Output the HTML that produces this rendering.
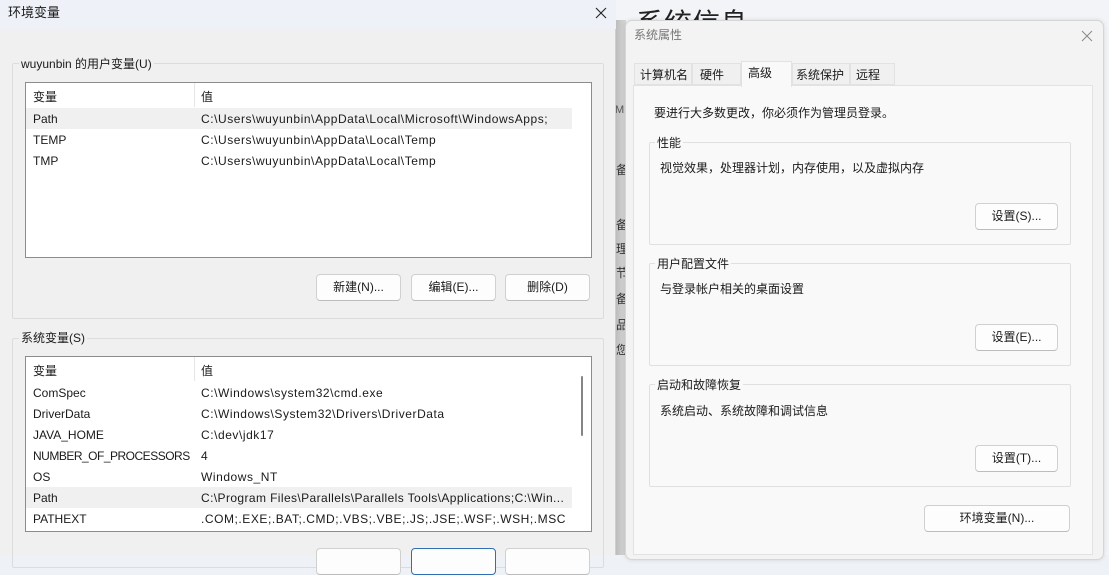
<!DOCTYPE html>
<html><head><meta charset="utf-8"><style>
*{margin:0;padding:0;box-sizing:border-box}
body{width:1109px;height:555px;overflow:hidden;position:relative;background:#eef1f5;font-family:"Liberation Sans","Noto Sans CJK SC",sans-serif;font-size:12px;color:#1a1a1a}
.a{position:absolute}
.t{position:absolute;white-space:nowrap;font-size:12px;line-height:14px}
.btn{position:absolute;background:#fdfdfd;border:1px solid #d0d0d0;border-bottom-color:#bcbcbc;border-radius:4px;text-align:center;font-size:12px;line-height:25px}
.grp{position:absolute;border:1px solid #dcdcdc;border-radius:2px}
.lbl{position:absolute;background:#f0f0f0;padding:0 2px;font-size:12px;line-height:14px;white-space:nowrap}
.tbl{position:absolute;background:#fff;border:1px solid #8c8c8c}
.row{position:absolute;left:0;height:21px;width:546px}
.row span{position:absolute;top:4px;font-size:12px;line-height:14px;white-space:nowrap}
.row span+span{letter-spacing:0.55px}
</style></head><body>
<div class="a" style="left:616px;top:0;width:493px;height:555px;background:#f2f4f7"></div>
<div class="t" style="left:636px;top:8px;font-size:28px;line-height:32px;color:#222;height:13px;overflow:hidden">系统信息</div>
<div class="a" style="left:616px;top:20px;width:10px;height:535px;background:linear-gradient(90deg,#bdbdbd,#d8d8d8)"></div>
<div class="t" style="left:615px;top:103px;font-size:11px;color:#555">M</div>
<div class="t" style="left:616px;top:163px;color:#333">备</div>
<div class="t" style="left:616px;top:218px;color:#333">备</div>
<div class="t" style="left:616px;top:242px;color:#333">理</div>
<div class="t" style="left:616px;top:266px;color:#333">节</div>
<div class="t" style="left:616px;top:292px;color:#333">备</div>
<div class="t" style="left:616px;top:318px;color:#333">品</div>
<div class="t" style="left:616px;top:343px;color:#333">您</div>

<div class="a" style="left:0;top:0;width:616px;height:555px;background:#f0f0f0;border-right:1px solid #cfcfcf"></div>
<div class="a" style="left:0;top:0;width:616px;height:29px;background:#eef2f8"></div>
<div class="t" style="left:8px;top:6px;font-size:13px">环境变量</div>
<svg class="a" style="left:595px;top:7px" width="12" height="12"><path d="M1 1L11 11M11 1L1 11" stroke="#222" stroke-width="1.1"/></svg>

<div class="grp" style="left:12px;top:63px;width:592px;height:256px"></div>
<div class="lbl" style="left:19px;top:57px">wuyunbin 的用户变量(U)</div>
<div class="tbl" style="left:25px;top:82px;width:567px;height:176px">
 <div class="a" style="left:168px;top:0;width:1px;height:24px;background:#e5e5e5"></div>
 <div class="row" style="top:1px;height:24px"><span style="left:7px;top:6px">变量</span><span style="left:175px;top:6px">值</span></div>
 <div class="row" style="top:25px;background:#f0f0f0"><span style="left:7px">Path</span><span style="left:175px">C:\Users\wuyunbin\AppData\Local\Microsoft\WindowsApps;</span></div>
 <div class="row" style="top:46px"><span style="left:7px">TEMP</span><span style="left:175px">C:\Users\wuyunbin\AppData\Local\Temp</span></div>
 <div class="row" style="top:67px"><span style="left:7px">TMP</span><span style="left:175px">C:\Users\wuyunbin\AppData\Local\Temp</span></div>
</div>
<div class="btn" style="left:316px;top:274px;width:85px;height:27px">新建(N)...</div>
<div class="btn" style="left:411px;top:274px;width:85px;height:27px">编辑(E)...</div>
<div class="btn" style="left:505px;top:274px;width:85px;height:27px">删除(D)</div>

<div class="grp" style="left:12px;top:338px;width:592px;height:230px"></div>
<div class="lbl" style="left:19px;top:331px">系统变量(S)</div>
<div class="tbl" style="left:25px;top:356px;width:567px;height:176px;overflow:hidden">
 <div class="a" style="left:168px;top:0;width:1px;height:24px;background:#e5e5e5"></div>
 <div class="row" style="top:1px;height:24px"><span style="left:7px;top:6px">变量</span><span style="left:175px;top:6px">值</span></div>
 <div class="row" style="top:25px"><span style="left:7px">ComSpec</span><span style="left:175px">C:\Windows\system32\cmd.exe</span></div>
 <div class="row" style="top:46px"><span style="left:7px">DriverData</span><span style="left:175px">C:\Windows\System32\Drivers\DriverData</span></div>
 <div class="row" style="top:67px"><span style="left:7px">JAVA_HOME</span><span style="left:175px">C:\dev\jdk17</span></div>
 <div class="row" style="top:88px"><span style="left:7px;letter-spacing:-0.5px">NUMBER_OF_PROCESSORS</span><span style="left:175px">4</span></div>
 <div class="row" style="top:109px"><span style="left:7px">OS</span><span style="left:175px">Windows_NT</span></div>
 <div class="row" style="top:130px;background:#f0f0f0"><span style="left:7px">Path</span><span style="left:175px;letter-spacing:0.4px">C:\Program Files\Parallels\Parallels Tools\Applications;C:\Win...</span></div>
 <div class="row" style="top:151px"><span style="left:7px">PATHEXT</span><span style="left:175px">.COM;.EXE;.BAT;.CMD;.VBS;.VBE;.JS;.JSE;.WSF;.WSH;.MSC</span></div>
 <div class="a" style="left:555px;top:19px;width:2px;height:60px;background:#858585;border-radius:1px"></div>
</div>
<div class="btn" style="left:316px;top:548px;width:85px;height:27px"></div>
<div class="btn" style="left:411px;top:548px;width:85px;height:27px;border-color:#2f6fb5"></div>
<div class="btn" style="left:505px;top:548px;width:85px;height:27px"></div>

<div class="a" style="left:625px;top:20px;width:479px;height:540px;background:#f3f3f3;border:1px solid #d6d6d6;border-radius:7px;box-shadow:0 0 4px rgba(0,0,0,.12)"></div>
<div class="t" style="left:634px;top:28px;color:#777">系统属性</div>
<svg class="a" style="left:1081px;top:30px" width="12" height="12"><path d="M1 1L11 11M11 1L1 11" stroke="#888" stroke-width="1"/></svg>
<div class="a" style="left:633px;top:85px;width:460px;height:470px;background:#f9f9f9;border:1px solid #e2e2e2"></div>
<div class="a" style="left:634px;top:63px;width:58px;height:22px;background:#f0f0f0;border:1px solid #e2e2e2"></div>
<div class="a" style="left:692px;top:63px;width:49px;height:22px;background:#f0f0f0;border:1px solid #e2e2e2"></div>
<div class="a" style="left:792px;top:63px;width:58px;height:22px;background:#f0f0f0;border:1px solid #e2e2e2"></div>
<div class="a" style="left:850px;top:63px;width:45px;height:22px;background:#f0f0f0;border:1px solid #e2e2e2"></div>
<div class="a" style="left:741px;top:61px;width:51px;height:26px;background:#f9f9f9;border:1px solid #e2e2e2;border-bottom:none"></div>
<div class="t" style="left:640px;top:68px">计算机名</div>
<div class="t" style="left:700px;top:68px">硬件</div>
<div class="t" style="left:748px;top:66px">高级</div>
<div class="t" style="left:796px;top:68px">系统保护</div>
<div class="t" style="left:856px;top:68px">远程</div>
<div class="t" style="left:654px;top:106px">要进行大多数更改，你必须作为管理员登录。</div>

<div class="grp" style="left:649px;top:142px;width:422px;height:103px;border-color:#e0e0e0"></div>
<div class="lbl" style="left:655px;top:136px;background:#f9f9f9">性能</div>
<div class="t" style="left:660px;top:161px">视觉效果，处理器计划，内存使用，以及虚拟内存</div>
<div class="btn" style="left:975px;top:203px;width:83px;height:27px">设置(S)...</div>

<div class="grp" style="left:649px;top:263px;width:422px;height:103px;border-color:#e0e0e0"></div>
<div class="lbl" style="left:655px;top:257px;background:#f9f9f9">用户配置文件</div>
<div class="t" style="left:660px;top:282px">与登录帐户相关的桌面设置</div>
<div class="btn" style="left:975px;top:324px;width:83px;height:27px">设置(E)...</div>

<div class="grp" style="left:649px;top:384px;width:422px;height:103px;border-color:#e0e0e0"></div>
<div class="lbl" style="left:655px;top:378px;background:#f9f9f9">启动和故障恢复</div>
<div class="t" style="left:660px;top:404px">系统启动、系统故障和调试信息</div>
<div class="btn" style="left:975px;top:445px;width:83px;height:27px">设置(T)...</div>

<div class="btn" style="left:924px;top:505px;width:146px;height:27px">环境变量(N)...</div>
</body></html>
